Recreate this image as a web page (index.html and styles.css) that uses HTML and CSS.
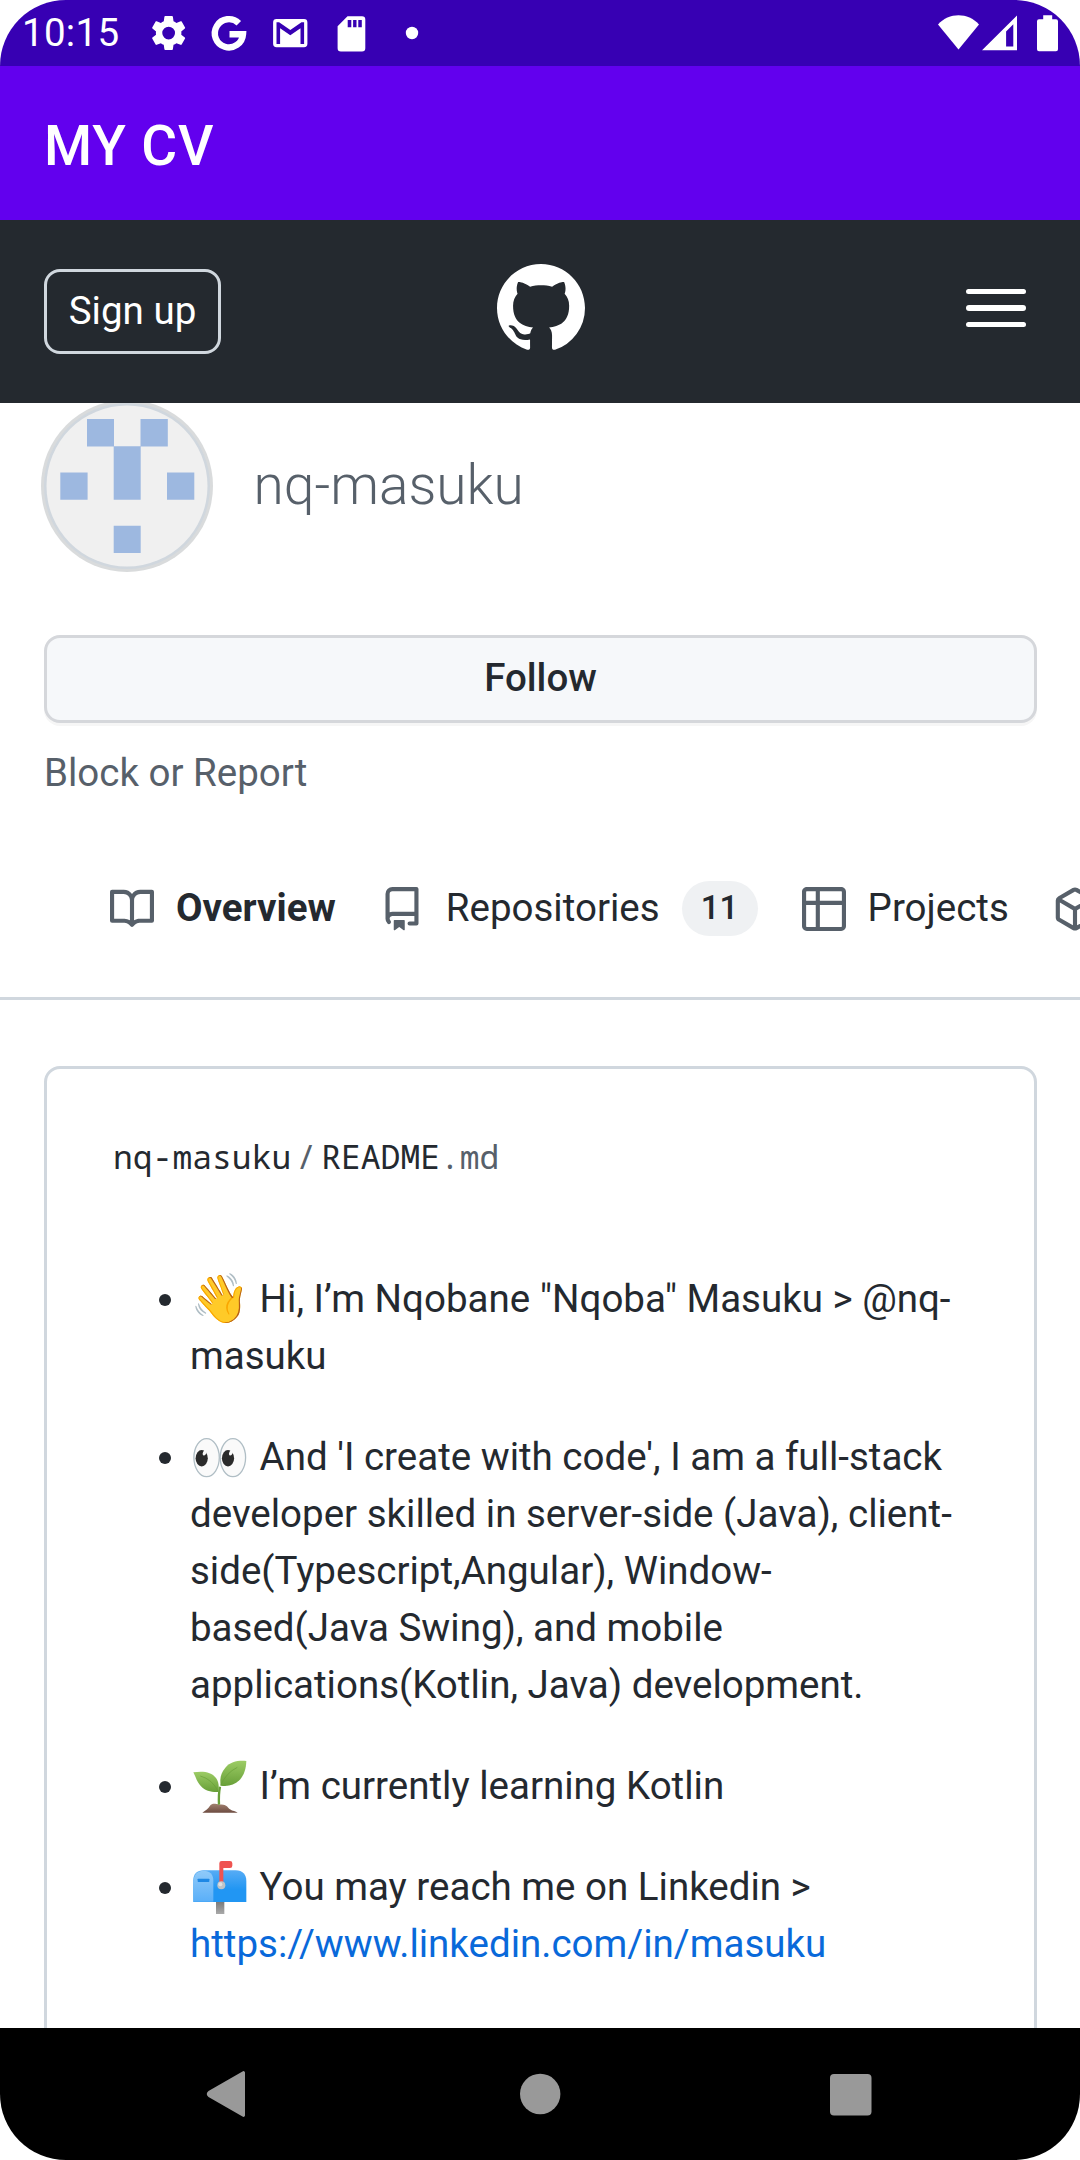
FILE: index.html
```html
<!DOCTYPE html>
<html lang="en">
<head>
<meta charset="utf-8">
<title>MY CV</title>
<link rel="stylesheet" href="styles.css">
</head>
<body>
<div class="screen">
  <div class="status-bar">
    <span class="clock">10:15</span>
    <svg class="status-icons" width="300" height="66" viewBox="130 0 300 66" fill="#fff">
      <path transform="translate(147.4 11.8) scale(1.77)" fill-rule="evenodd" d="M19.14 12.94c.04-.3.06-.61.06-.94 0-.32-.02-.64-.07-.94l2.03-1.58c.18-.14.23-.41.12-.61l-1.92-3.32c-.12-.22-.37-.29-.59-.22l-2.39.96c-.5-.38-1.03-.7-1.62-.94l-.36-2.54c-.04-.24-.24-.41-.48-.41h-3.84c-.24 0-.43.17-.47.41l-.36 2.54c-.59.24-1.13.57-1.62.94l-2.39-.96c-.22-.08-.47 0-.59.22L2.74 8.87c-.12.21-.08.47.12.61l2.03 1.58c-.05.3-.09.63-.09.94s.02.64.07.94l-2.03 1.58c-.18.14-.23.41-.12.61l1.92 3.32c.12.22.37.29.59.22l2.39-.96c.5.38 1.03.7 1.62.94l.36 2.54c.05.24.24.41.48.41h3.84c.24 0 .44-.17.47-.41l.36-2.54c.59-.24 1.13-.56 1.62-.94l2.39.96c.22.08.47 0 .59-.22l1.92-3.32c.12-.22.07-.47-.12-.61l-2.01-1.58zM12 15.6a3.6 3.6 0 1 1 0-7.2 3.6 3.6 0 0 1 0 7.2z"/>
      <path fill="none" stroke="#fff" stroke-width="6.4" d="M238.8 23.2A14.1 14.1 0 1 0 243 34.2H229.5"/>
      <path fill-rule="evenodd" d="M276.500 19h27.500a3.400 3.400 0 0 1 3.400 3.400v21.400a3.400 3.400 0 0 1-3.400 3.400h-27.500a3.400 3.400 0 0 1-3.400-3.400V22.400a3.400 3.400 0 0 1 3.400-3.400zM276.500 22.300v21.600h3.600V28.300l10.200 7 10.200-7v15.600h3.600V22.300h-2.600l-11.200 7.600-11.200-7.600z"/>
      <path fill-rule="evenodd" d="M347.500 16.300H362a3.300 3.300 0 0 1 3.300 3.300v28.600a3.300 3.300 0 0 1-3.300 3.300h-21.100a3.300 3.300 0 0 1-3.300-3.300V26.200zM347.700 20v7.300h3.600V20zm5.400 0v7.300h3.400V20zm5.200 0v7.300h3.500V20z"/>
      <circle cx="412" cy="33" r="6.200"/>
    </svg>
    <svg class="system-icons" width="130" height="66" viewBox="935 0 130 66" fill="#fff">
      <path d="M958.500 49.500 938 24.500C949 12.200 968 12.200 979 24.500z"/>
      <path fill-rule="evenodd" d="M1017 15.500V50.200H982zM1013.300 24.300l-7.200 7.200v15h7.200z"/>
      <path d="M1043.200 15.200h9v4h3.800q2 0 2 2v28q0 2-2 2h-17q-2 0-2-2v-28q0-2 2-2h4.200z"/>
    </svg>
  </div>
  <header class="app-bar">MY CV</header>

  <div class="site-header">
    <a class="sign-up">Sign up</a>
    <svg class="mark" width="88" height="88" viewBox="0 0 16 16" fill="#fff"><path d="M8 0C3.58 0 0 3.58 0 8c0 3.54 2.29 6.53 5.47 7.59.4.07.55-.17.55-.38 0-.19-.01-.82-.01-1.49-2.01.37-2.53-.49-2.69-.94-.09-.23-.48-.94-.82-1.13-.28-.15-.68-.52-.01-.53.63-.01 1.08.58 1.23.82.72 1.21 1.87.87 2.33.66.07-.52.28-.87.51-1.07-1.78-.2-3.64-.89-3.64-3.95 0-.87.31-1.59.82-2.15-.08-.2-.36-1.02.08-2.12 0 0 .67-.21 2.2.82.64-.18 1.32-.27 2-.27.68 0 1.36.09 2 .27 1.53-1.04 2.2-.82 2.2-.82.44 1.1.16 1.92.08 2.12.51.56.82 1.27.82 2.15 0 3.07-1.87 3.75-3.65 3.95.29.25.54.73.54 1.48 0 1.07-.01 1.93-.01 2.2 0 .21.15.46.55.38A8.013 8.013 0 0016 8c0-4.42-3.58-8-8-8z"/></svg>
    <svg class="menu" width="60" height="38" viewBox="0 0 60 38" fill="#fff"><rect width="60" height="5" rx="2.500"/><rect y="16" width="60" height="6" rx="3"/><rect y="33" width="60" height="5" rx="2.500"/></svg>
  </div>

  <main class="content">
    <section class="profile">
      <svg class="avatar" width="172" height="172" viewBox="0 0 172 172">
        <circle cx="86" cy="86" r="86" fill="#d9dbdc"/>
        <circle cx="86" cy="86" r="83" fill="#d0d7de"/>
        <circle cx="86" cy="86" r="80.500" fill="#f0f0f0"/>
        <path fill="#9db8e0" d="M46 19h27v27.500H46zM99.500 19h27.300v27.500H99.500zM72.700 46.200h27v53.500h-27zM19.300 72.500h27.300v27.200H19.300zM126 72.500h27.300v27.200H126zM72.700 125.700h27v27.300h-27z"/>
      </svg>
      <h1 class="username">nq-masuku</h1>
    </section>
    <button class="follow">Follow</button>
    <p class="block-report">Block or Report</p>

    <nav class="tabs">
      <a class="tab tab-selected"><svg width="44" height="44" viewBox="0 0 16 16"><path fill-rule="evenodd" d="M0 1.750A.750.750 0 01.750 1h4.253c1.227 0 2.317.590 3 1.501A3.744 3.744 0 0111.006 1h4.245a.750.750 0 01.750.750v10.500a.750.750 0 01-.750.750h-4.507a2.250 2.250 0 00-1.591.659l-.622.621a.750.750 0 01-1.060 0l-.622-.621A2.250 2.250 0 005.258 13H.750a.750.750 0 01-.750-.750V1.750zm8.755 3a2.250 2.250 0 012.250-2.250H14.500v9h-3.757c-.710 0-1.400.201-1.992.572l.004-7.322zm-1.504 7.324l.004-5.073-.002-2.253A2.250 2.250 0 005.003 2.500H1.500v9h3.757a3.750 3.750 0 011.994.574z"/></svg><span>Overview</span></a>
      <a class="tab"><svg width="44" height="44" viewBox="0 0 16 16"><path fill-rule="evenodd" d="M2 2.500A2.500 2.500 0 014.500 0h8.750a.750.750 0 01.750.750v12.500a.750.750 0 01-.750.750h-2.500a.750.750 0 110-1.500h1.750v-2h-8a1 1 0 00-.714 1.700.750.750 0 01-1.072 1.050A2.495 2.495 0 012 11.500v-9zm10.500-1V9h-8c-.356 0-.694.074-1 .208V2.500a1 1 0 011-1h8zM5 12.250v3.250a.250.250 0 00.400.200l1.450-1.087a.250.250 0 01.300 0L8.600 15.700a.250.250 0 00.400-.200v-3.250a.250.250 0 00-.250-.250h-3.500a.250.250 0 00-.250.250z"/></svg><span>Repositories</span><span class="counter">11</span></a>
      <a class="tab"><svg width="44" height="44" viewBox="0 0 16 16"><path fill-rule="evenodd" d="M1.750 0h12.500C15.216 0 16 .784 16 1.750v12.500A1.750 1.750 0 0114.250 16H1.750A1.750 1.750 0 010 14.250V1.750C0 .784.784 0 1.750 0zM1.500 6.500v7.750c0 .138.112.250.250.250H5v-8H1.500zM5 5H1.500V1.750a.250.250 0 01.250-.250H5V5zm1.500 1.500v8h7.750a.250.250 0 00.250-.250V6.500h-8zM14.500 5h-8V1.500h7.750a.250.250 0 01.250.250V5z"/></svg><span>Projects</span></a>
      <a class="tab"><svg width="44" height="44" viewBox="0 0 16 16"><path fill-rule="evenodd" d="M8.878.392a1.750 1.750 0 00-1.756 0l-5.250 3.045A1.750 1.750 0 001 4.951v6.098c0 .624.332 1.200.872 1.514l5.250 3.045a1.750 1.750 0 001.756 0l5.250-3.045c.540-.313.872-.890.872-1.514V4.951c0-.624-.332-1.200-.872-1.514L8.878.392zM7.875 1.690a.250.250 0 01.250 0l4.630 2.685L8 7.133 3.245 4.375l4.630-2.685zM2.500 5.677v5.372c0 .090.047.171.125.216l4.625 2.683V8.432L2.500 5.677zm6.250 8.271l4.625-2.683a.250.250 0 00.125-.216V5.677L8.750 8.432v5.516z"/></svg></a>
    </nav>

    <article class="readme">
      <div class="readme-path">nq-masuku<span class="slash">/</span>README<span class="ext">.md</span></div>
      <ul class="readme-list">
        <li><span class="emoji">👋</span> Hi, I’m Nqobane "Nqoba" Masuku &gt; @nq-<br>masuku</li>
        <li><svg class="emoji-art" width="54" height="53" viewBox="0 0 54 53">
            <g fill="#fafafa" stroke="#b0bec5" stroke-width="1.300"><ellipse cx="13.600" cy="26.600" rx="12.700" ry="19"/><ellipse cx="39.900" cy="26.600" rx="12.700" ry="19"/></g>
            <g fill="#2b2b2b"><ellipse cx="8.700" cy="27.200" rx="6.100" ry="8.200"/><ellipse cx="35" cy="27.200" rx="6.100" ry="8.200"/></g>
            <g fill="#fafafa"><ellipse cx="11.800" cy="21.500" rx="1.700" ry="3.200" transform="rotate(25 11.800 21.500)"/><ellipse cx="38.100" cy="21.500" rx="1.700" ry="3.200" transform="rotate(25 38.100 21.500)"/></g>
          </svg> And 'I create with code', I am a full-stack<br>developer skilled in server-side (Java), client-<br>side(Typescript,Angular), Window-<br>based(Java Swing), and mobile<br>applications(Kotlin, Java) development.</li>
        <li><svg class="emoji-art" width="54" height="53" viewBox="38 46 162 159">
            <defs>
              <linearGradient id="leaf" x1="0" y1="0" x2="0" y2="1"><stop offset="0" stop-color="#9ccc65"/><stop offset="1" stop-color="#689f38"/></linearGradient>
              <linearGradient id="soil" x1="0" y1="0" x2="0" y2="1"><stop offset="0" stop-color="#a1806f"/><stop offset="1" stop-color="#6d4c41"/></linearGradient>
            </defs>
            <path d="M66 204C76 196 84 192 89 183C94 176 103 177 108 178C117 180 121 179 129 180C140 182 142 188 149 194C157 200 166 199 172 204z" fill="url(#soil)"/>
            <path d="M116 180C115 160 115 145 119 126" fill="none" stroke="#689f38" stroke-width="7"/>
            <path d="M39 83C70 79 93 82 107 100C115 111 117 126 114 142C94 143 75 139 62 125C50 112 46 97 39 83z" fill="url(#leaf)"/>
            <path d="M198 49C197 72 192 91 177 107C162 122 143 126 121 123C118 101 121 85 135 69C151 51 172 47 198 49z" fill="url(#leaf)"/>
            <path d="M60 94Q96 104 114 141M171 68Q137 85 121 122" fill="none" stroke="#689f38" stroke-width="2"/>
          </svg> I’m currently learning Kotlin</li>
        <li><svg class="emoji-art" width="54" height="53" viewBox="38 348 162 159">
            <defs>
              <linearGradient id="box" x1="0" y1="0" x2="0" y2="1"><stop offset="0" stop-color="#57acf5"/><stop offset=".6" stop-color="#2196f3"/></linearGradient>
              <linearGradient id="door" x1="0" y1="0" x2="0" y2="1"><stop offset="0" stop-color="#90caf9"/><stop offset="1" stop-color="#5aaff8"/></linearGradient>
              <linearGradient id="post" x1="0" y1="0" x2="0" y2="1"><stop offset="0" stop-color="#757575"/><stop offset="1" stop-color="#a9a9a9"/></linearGradient>
            </defs>
            <path d="M107 466h25v41h-25z" fill="url(#post)"/>
            <path d="M39 471V405C39 387 51 376 69 376H166C187 376 198 389 198 407V471z" fill="url(#box)"/>
            <path d="M40 470V406C40 388 53 377 70 377C88 377 99 388 99 406V470z" fill="url(#door)"/>
            <rect x="52" y="401" width="35" height="10" rx="2" fill="#1e88e5"/>
            <path d="M117 418V355q0-7 7-7h25q7 0 7 7v7q0 7-7 7h-20v49z" fill="#ef5350"/>
            <circle cx="123" cy="421" r="12" fill="#bdc3c7"/><circle cx="120" cy="418" r="6" fill="#e0e0e0"/>
          </svg> You may reach me on Linkedin &gt;<br><a class="link">https://www.linkedin.com/in/masuku</a></li>
      </ul>
    </article>
  </main>

  <footer class="nav-bar">
    <svg width="44" height="48" viewBox="0 0 44 48"><path d="M41 2.500v43a1.500 1.500 0 0 1-2.500 1L4.500 27q-3.500-3 0-6L38.500 1.500a1.500 1.500 0 0 1 2.500 1z"/></svg>
    <svg width="44" height="48" viewBox="0 0 44 48"><circle cx="23.200" cy="24" r="20.200"/></svg>
    <svg width="44" height="48" viewBox="0 0 44 48"><rect x="1" y="4" width="41.500" height="41.500" rx="4"/></svg>
  </footer>
</div>
</body>
</html>
```

FILE: styles.css
```css
* { box-sizing: border-box; }
body { margin: 0; background: #fff; }
.screen {
  width: 1080px;
  height: 2160px;
  display: flex;
  flex-direction: column;
  overflow: hidden;
  border-radius: 66px;
  background: #fff;
  color: #24292f;
  font-family: Roboto, sans-serif;
  font-size: 38.5px;
}
svg { display: block; flex: none; }

.status-bar {
  height: 66px;
  flex: none;
  display: flex;
  align-items: center;
  padding: 0 15px 0 22px;
  background: #3700b3;
  color: #fff;
}
.clock { width: 108px; line-height: 70px; letter-spacing: .3px; }
.system-icons { margin-left: auto; }
.app-bar {
  height: 154px;
  flex: none;
  padding-left: 44px;
  background: #6200ee;
  color: #fff;
  font-size: 55px;
  font-weight: 500;
  line-height: 160px;
  letter-spacing: .9px;
}

.site-header {
  height: 183px;
  flex: none;
  display: grid;
  grid-template-columns: 1fr 88px 1fr;
  align-items: start;
  padding: 43px 54px 0 44px;
  background: #24292f;
  position: relative;
  z-index: 1;
}
.sign-up {
  justify-self: start;
  margin-top: 6px;
  width: 177px;
  height: 85px;
  border: 3px solid #d0d7de;
  border-radius: 16px;
  color: #fff;
  text-align: center;
  line-height: 77px;
}
.mark { margin: 1px 0 0 6px; }
.menu { justify-self: end; margin-top: 26px; }

.content { flex: 1; min-height: 0; overflow: hidden; }
.profile { display: flex; gap: 40.5px; margin: -3px 0 63px 41px; }
.username { margin: 0; font-size: 55px; font-weight: 300; line-height: 170px; color: #57606a; }
.follow {
  display: block;
  width: 993px;
  height: 88px;
  margin: 0 0 0 44px;
  padding: 0 0 2px;
  border: 3px solid #d5d7db;
  border-radius: 16px;
  background: #f6f8fa;
  box-shadow: 0 3px 0 rgba(27, 31, 36, .04);
  color: #24292f;
  font: 500 38.5px/80px Roboto, sans-serif;
}
.block-report { margin: 22px 0 0 44px; line-height: 56px; color: #57606a; }

.tabs {
  display: flex;
  align-items: center;
  gap: 44px;
  height: 181px;
  margin-top: 18px;
  padding: 0 0 0 110px;
  border-bottom: 3px solid #d0d7de;
  overflow: hidden;
}
.tab { display: flex; align-items: center; gap: 22px; line-height: 58px; flex: none; }
.tab svg { fill: #57606a; margin-top: 2px; }
.tab-selected { font-weight: 700; }
.counter {
  width: 76px;
  height: 55px;
  border-radius: 28px;
  background: #eff1f3;
  font-size: 33px;
  font-weight: 500;
  line-height: 54px;
  text-align: center;
}

.readme {
  width: 993px;
  height: 1100px;
  margin: 66px 0 0 44px;
  padding: 63px 66px;
  border: 3px solid #d0d7de;
  border-radius: 16px;
}
.readme-path {
  font: 33px/50px "Droid Sans Mono", "Noto Sans Mono", "DejaVu Sans Mono", monospace;
}
.slash { margin: 0 5px; color: #57606a; display: inline-block; width: 20px; }
.ext { color: #57606a; }
.readme-list { margin: 88px 0 0; padding-left: 77px; line-height: 57px; }
.readme-list li { margin-bottom: 44px; white-space: nowrap; }
.readme-list li::marker { letter-spacing: -1px; }
.emoji {
  display: inline-block;
  width: 60px;
  font-family: "Noto Color Emoji", sans-serif;
  font-size: 48px;
  line-height: 40px;
  vertical-align: -3px;
}
.emoji-art { display: inline-block; margin: 0 3px; vertical-align: -14px; }
.link { color: #0969da; }

.nav-bar {
  height: 132px;
  flex: none;
  display: flex;
  justify-content: space-between;
  align-items: center;
  padding: 0 207px 0 204px;
  background: #000;
}
.nav-bar svg { fill: #999; }
```
